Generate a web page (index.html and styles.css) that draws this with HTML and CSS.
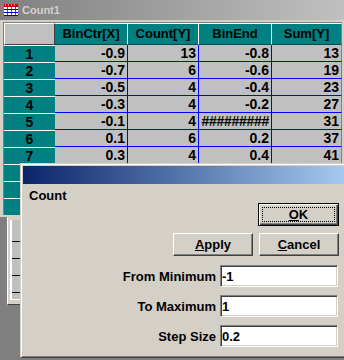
FILE: index.html
```html
<!DOCTYPE html>
<html lang="en">
<head>
  <meta charset="UTF-8" />
  <title>Count1</title>
  <link rel="stylesheet" href="styles.css">
</head>
<body>
  <div class="sheet">
    <div class="sheet-title">
      <svg class="sheet-icon" width="16" height="14" viewBox="0 0 16 14">
        <rect x="0.5" y="0.5" width="15" height="13" fill="#fff" stroke="#808080"/>
        <rect x="1" y="1" width="14" height="3" fill="#d00000"/>
        <path d="M2 2h1M5 2h1M8 2h1M11 2h1" stroke="#fff"/>
        <path d="M4.5 4v9M8.5 4v9M12.5 4v9" stroke="#00a000"/>
        <path d="M1 6.5h14M1 9.5h14M1 12.5h14" stroke="#0000d0"/>
      </svg>
      <span>Count1</span>
    </div>
    <div class="sheet-body">
      <div class="grid">
        <div class="corner"></div>
        <div class="colhead">BinCtr[X]</div>
        <div class="colhead">Count[Y]</div>
        <div class="colhead">BinEnd</div>
        <div class="colhead last">Sum[Y]</div>

        <div class="rowhead">1</div><div class="cell">-0.9</div><div class="cell">13</div><div class="cell">-0.8</div><div class="cell last">13</div>
        <div class="rowhead">2</div><div class="cell">-0.7</div><div class="cell">6</div><div class="cell">-0.6</div><div class="cell last">19</div>
        <div class="rowhead">3</div><div class="cell">-0.5</div><div class="cell">4</div><div class="cell">-0.4</div><div class="cell last">23</div>
        <div class="rowhead">4</div><div class="cell">-0.3</div><div class="cell">4</div><div class="cell">-0.2</div><div class="cell last">27</div>
        <div class="rowhead">5</div><div class="cell">-0.1</div><div class="cell">4</div><div class="cell hash">#########</div><div class="cell last">31</div>
        <div class="rowhead">6</div><div class="cell">0.1</div><div class="cell">6</div><div class="cell">0.2</div><div class="cell last">37</div>
        <div class="rowhead">7</div><div class="cell">0.3</div><div class="cell">4</div><div class="cell">0.4</div><div class="cell last">41</div>
        <!-- rows 8-10 sit under the dialog -->
        <div class="rowhead"></div><div class="cell"></div><div class="cell"></div><div class="cell"></div><div class="cell last"></div>
        <div class="rowhead"></div><div class="cell"></div><div class="cell"></div><div class="cell"></div><div class="cell last"></div>
        <div class="rowhead"></div><div class="cell"></div><div class="cell"></div><div class="cell"></div><div class="cell last"></div>
      </div>
    </div>
  </div>

  <div class="back-win">
    <div class="back-grid">
      <div class="back-row"></div>
      <div class="back-row"></div>
      <div class="back-row"></div>
      <div class="back-row"></div>
      <div class="back-row"></div>
    </div>
  </div>

  <div class="dialog">
    <div class="dlg-title"></div>
    <div class="dlg-body">
      <div class="dlg-label">Count</div>
      <div class="ok-row">
        <button class="btn btn-default"><u>O</u>K</button>
      </div>
      <div class="btn-row">
        <button class="btn"><u>A</u>pply</button>
        <button class="btn"><u>C</u>ancel</button>
      </div>
      <div class="fields">
        <label for="from_min">From Minimum</label>
        <input id="from_min" class="field" type="text" value="-1" />
        <label for="to_max">To Maximum</label>
        <input id="to_max" class="field" type="text" value="1" />
        <label for="step">Step Size</label>
        <input id="step" class="field" type="text" value="0.2" />
      </div>
    </div>
  </div>
</body>
</html>
```

FILE: styles.css
```css
:root {
  --face: #d4d0c8;
  --shadow: #808080;
  --dark: #404040;
  --teal: #008080;
  --cell: #c0c0c0;
  --line: #0000ff;
}

* {
  box-sizing: border-box;
}

body {
  margin: 0;
  width: 344px;
  height: 360px;
  overflow: hidden;
  position: relative;
  background: var(--shadow);
  font-family: "Liberation Sans", Arial, sans-serif;
  color: #000;
}

/* worksheet window */
.sheet {
  width: 344px;
  height: 217px;
  background: var(--face);
}

.sheet-title {
  height: 20px;
  display: flex;
  align-items: center;
  gap: 3px;
  padding-left: 3px;
  background: linear-gradient(90deg, #808080, #c0c0c0);
  color: var(--face);
  font-weight: bold;
  font-size: 11px;
}

.sheet-icon {
  display: block;
}

.sheet-body {
  padding: 2px 2px 0 3px;
}

.grid {
  display: grid;
  grid-template-columns: 51px 73px 71px 73px 70px;
  grid-template-rows: 22px repeat(10, 17px);
  border-top: 1px solid var(--shadow);
  border-left: 1px solid var(--shadow);
}

.corner {
  background: var(--cell);
  border-top: 1px solid #fff;
  border-left: 1px solid #fff;
  border-right: 1px solid var(--dark);
  border-bottom: 1px solid var(--dark);
}

.colhead {
  background: var(--teal);
  border-top: 1px solid #fff;
  border-right: 1px solid #fff;
  border-bottom: 1px solid #005050;
  font-weight: bold;
  font-size: 13px;
  line-height: 20px;
  text-align: center;
}

.colhead.last {
  border-right-color: var(--shadow);
}

.rowhead {
  background: var(--teal);
  border-top: 1px solid #fff;
  font-weight: bold;
  font-size: 14px;
  line-height: 16px;
  text-align: center;
}

.cell {
  background: var(--cell);
  border-right: 1px solid var(--line);
  border-bottom: 1px solid var(--line);
  padding-right: 2px;
  font-weight: bold;
  font-size: 14px;
  line-height: 16px;
  text-align: right;
  white-space: nowrap;
  overflow: hidden;
}

.cell.last {
  border-right-color: var(--shadow);
}

.cell.hash {
  letter-spacing: -0.3px;
}

/* window partly hidden behind the dialog */
.back-win {
  position: absolute;
  left: 7px;
  top: 217px;
  width: 30px;
  height: 88px;
  background: var(--face);
  border: 1px solid;
  border-color: var(--face) var(--dark) var(--dark) #fff;
  padding: 2px 2px 4px 2px;
}

.back-grid {
  display: grid;
  grid-template-rows: 22px repeat(4, 17px);
  height: 100%;
  background: var(--cell);
  border-left: 2px solid #fff;
  border-bottom: 1px solid #fff;
}

.back-row {
  border-bottom: 1px solid #000;
}

.back-row:last-child {
  border-bottom: none;
}

/* dialog */
.dialog {
  position: absolute;
  left: 20px;
  top: 163px;
  width: 330px;
  height: 195px;
  padding: 2px;
  background: var(--face);
  border: 1px solid;
  border-color: var(--face) var(--dark) var(--dark) var(--face);
  box-shadow: inset 1px 1px #fff, inset -1px -1px var(--shadow);
}

.dlg-title {
  height: 18px;
  background: linear-gradient(90deg, #0a246a, #a6caf0);
}

.dlg-body {
  padding: 5px 8px 0 6px;
  font-weight: bold;
  font-size: 13px;
}

.dlg-label {
  line-height: 14px;
}

.ok-row {
  display: flex;
  justify-content: flex-end;
}

.btn-row {
  display: flex;
  justify-content: flex-end;
  gap: 6px;
  margin-top: 7px;
}

.btn {
  width: 80px;
  height: 23px;
  padding: 0;
  background: var(--face);
  border: 1px solid;
  border-color: #fff var(--dark) var(--dark) #fff;
  box-shadow: inset -1px -1px var(--shadow);
  font-family: "Liberation Sans", Arial, sans-serif;
  font-weight: bold;
  font-size: 13px;
  color: #000;
}

.btn-default {
  width: 81px;
  border-color: #000;
  box-shadow: inset 1px 1px #fff, inset -1px -1px var(--dark), inset -2px -2px var(--shadow);
  outline: 1px dotted #000;
  outline-offset: -5px;
}

.fields {
  display: grid;
  grid-template-columns: 1fr 118px;
  column-gap: 4px;
  row-gap: 8px;
  align-items: center;
  margin-top: 9px;
  padding-right: 1px;
}

.fields label {
  text-align: right;
}

.field {
  display: block;
  width: 118px;
  height: 22px;
  padding: 0 1px;
  background: #fff;
  border: 1px solid;
  border-color: var(--shadow) #fff #fff var(--shadow);
  box-shadow: inset 1px 1px var(--dark), inset -1px -1px var(--face);
  font-family: "Liberation Sans", Arial, sans-serif;
  font-weight: bold;
  font-size: 13px;
  color: #000;
  outline: none;
}
```
